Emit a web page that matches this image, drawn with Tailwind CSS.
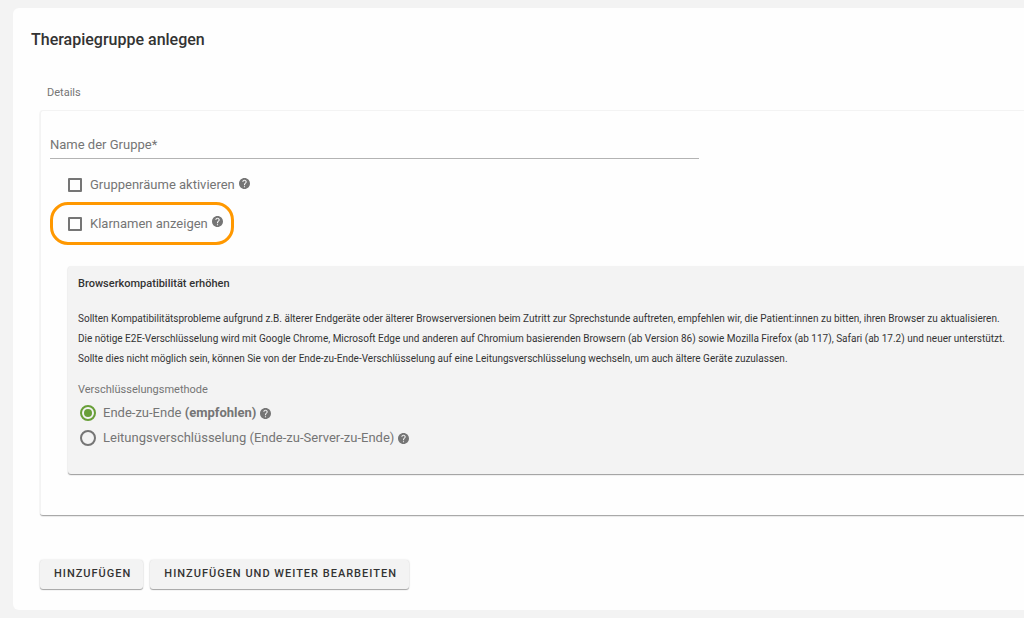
<!DOCTYPE html>
<html lang="de">
<head>
<meta charset="utf-8">
<meta name="viewport" content="width=device-width, initial-scale=1">
<title>Therapiegruppe anlegen</title>
<script src="https://cdn.jsdelivr.net/npm/@tailwindcss/browser@4"></script>
</head>
<body class="min-h-screen overflow-x-hidden bg-[#f3f3f3] py-2 pl-[13px] font-['Roboto',sans-serif] text-[#757575]">
<svg class="hidden" aria-hidden="true">
  <symbol id="help" viewBox="2 2 20 20"><path fill="currentColor" d="M12 2C6.48 2 2 6.48 2 12s4.480 10 10 10 10-4.480 10-10S17.520 2 12 2zm1 17h-2v-2h2v2zm2.070-7.750l-.9.920C13.450 12.900 13 13.500 13 15h-2v-.5c0-1.100.45-2.100 1.170-2.830l1.240-1.260c.37-.36.59-.86.59-1.410 0-1.100-.9-2-2-2s-2 .9-2 2H8c0-2.210 1.790-4 4-4s4 1.790 4 4c0 .88-.36 1.680-.93 2.250z"/></symbol>
</svg>
<main class="rounded-l-md bg-[#fefefe] pt-5 pb-[21px]">
  <h1 class="pl-[18px] text-base leading-6 font-medium text-[#333]">Therapiegruppe anlegen</h1>
  <form class="mt-[31px] pl-[27px]">
    <h2 class="pl-[7px] text-[11px] leading-5">Details</h2>
    <section class="mt-[7px] rounded-l-[3px] border-t border-l border-[#f3f3f3] pt-5 pb-[41px] pl-[9px] shadow-[0_1px_1px_#00000055,0_2px_1px_#0000000d]">
      <input type="text" aria-label="Name der Gruppe" placeholder="Name der Gruppe*" class="block h-7 w-2/3 border-b border-[#b3b3b3] text-[13px] outline-none placeholder:text-[#757575]">
      <div class="mt-4 flex h-5 items-center pl-[18px] text-[13px]">
        <input id="rooms" type="checkbox" class="mr-2 size-[14px] appearance-none rounded-[1px] border-2 border-[#757575] checked:bg-[#689f38]">
        <label for="rooms">Gruppenräume aktivieren</label>
        <svg class="mb-1 ml-1 size-[11px]" role="img" aria-label="Hilfe"><use href="#help"/></svg>
      </div>
      <div class="mt-[7px] flex h-[43px] w-fit items-center rounded-[18px] border-3 border-[#ff9800] pr-2 pl-[15px] text-[13px]">
        <input id="names" type="checkbox" class="mr-2 size-[14px] appearance-none rounded-[1px] border-2 border-[#757575] checked:bg-[#689f38]">
        <label for="names">Klarnamen anzeigen</label>
        <svg class="mb-1 ml-1 size-[11px]" role="img" aria-label="Hilfe"><use href="#help"/></svg>
      </div>
      <section class="mt-[21px] ml-[18px] rounded-l-[3px] bg-[#f3f3f3] pt-2 pb-6 pl-[10px] shadow-[0_1px_1px_#00000055,0_1px_2px_#0000001a]">
        <h3 class="text-[11px] leading-5 font-medium text-[#333]">Browserkompatibilität erhöhen</h3>
        <p class="mt-[15px] text-[10px] leading-5 whitespace-nowrap text-[#333]">Sollten Kompatibilitätsprobleme aufgrund z.B. älterer Endgeräte oder älterer Browserversionen beim Zutritt zur Sprechstunde auftreten, empfehlen wir, die Patient:innen zu bitten, ihren Browser zu aktualisieren.<br>Die nötige E2E-Verschlüsselung wird mit Google Chrome, Microsoft Edge und anderen auf Chromium basierenden Browsern (ab Version 86) sowie Mozilla Firefox (ab 117), Safari (ab 17.2) und neuer unterstützt.<br>Sollte dies nicht möglich sein, können Sie von der Ende-zu-Ende-Verschlüsselung auf eine Leitungsverschlüsselung wechseln, um auch ältere Geräte zuzulassen.</p>
        <fieldset class="mt-[11px] text-[13px]">
          <legend class="text-[11px] leading-5">Verschlüsselungsmethode</legend>
          <div class="flex h-[25px] items-center pl-0.5">
            <input id="e2e" type="radio" name="enc" checked class="mr-[7px] grid size-4 appearance-none place-items-center rounded-full border-2 border-[#757575] checked:border-[#689f38] checked:before:size-2 checked:before:rounded-full checked:before:bg-[#689f38]">
            <label for="e2e">Ende-zu-Ende <strong class="font-bold">(empfohlen)</strong></label>
            <svg class="mt-0.5 ml-1 size-[11px]" role="img" aria-label="Hilfe"><use href="#help"/></svg>
          </div>
          <div class="flex h-[25px] items-center pl-0.5">
            <input id="line" type="radio" name="enc" class="mr-[7px] grid size-4 appearance-none place-items-center rounded-full border-2 border-[#757575] checked:border-[#689f38] checked:before:size-2 checked:before:rounded-full checked:before:bg-[#689f38]">
            <label for="line">Leitungsverschlüsselung (Ende-zu-Server-zu-Ende)</label>
            <svg class="mt-0.5 ml-1 size-[11px]" role="img" aria-label="Hilfe"><use href="#help"/></svg>
          </div>
        </fieldset>
      </section>
    </section>
    <div class="mt-[45px] flex gap-[7px] text-[11px] font-medium text-[#333]">
      <button type="button" class="h-[29px] rounded-[3px] bg-[#f3f3f3] pr-3 pl-[14px] tracking-[1px] shadow-[0_1px_1px_#00000055,0_0_2px_#00000026]">HINZUFÜGEN</button>
      <button type="button" class="h-[29px] rounded-[3px] bg-[#f3f3f3] pr-3 pl-[14px] tracking-[1px] shadow-[0_1px_1px_#00000055,0_0_2px_#00000026]">HINZUFÜGEN UND WEITER BEARBEITEN</button>
    </div>
  </form>
</main>
</body>
</html>
